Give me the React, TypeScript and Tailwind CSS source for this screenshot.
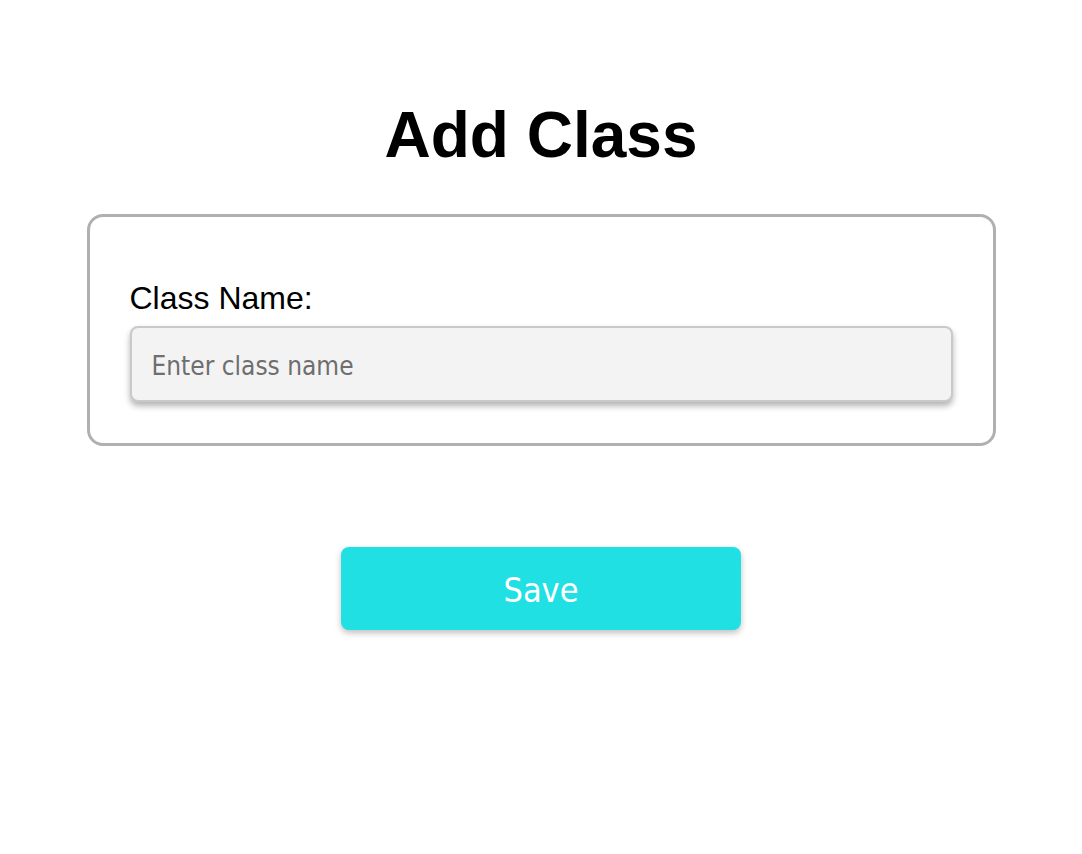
export default function App() {
  return (
    <div className="min-h-screen bg-white flex flex-col items-center font-['Liberation_Sans',Arial,sans-serif]">
      {/* Heading */}
      <h1 className="mt-[103px] text-[64px] leading-none font-bold text-black">Add Class</h1>

      {/* Form card */}
      <div className="mt-[47px] w-[909px] border-[3px] border-[#b0b0b0] rounded-[16px] px-[40px] pt-[63px] pb-[41px]">
        <label htmlFor="className" className="block text-[32px] leading-[36px] text-black">
          Class Name:
        </label>
        <input
          id="className"
          type="text"
          placeholder="Enter class name"
          className="mt-[10px] w-full h-[76px] px-[20px] pt-[3px] bg-[#f3f3f3] border-2 border-[#c9c9c9] rounded-[8px] shadow-[0_4px_6px_rgba(0,0,0,0.3)] text-[26px] font-['DejaVu_Sans_Condensed','DejaVu_Sans',sans-serif] text-black placeholder:text-[#6e6e6e] outline-none"
        />
      </div>

      {/* Save button */}
      <button
        type="button"
        className="mt-[101px] w-[400px] h-[83px] pt-[3px] rounded-[8px] bg-[#20e0e4] text-white text-[34px] font-['DejaVu_Sans_Condensed','DejaVu_Sans',sans-serif] shadow-[0_3px_6px_rgba(0,0,0,0.25)]"
      >
        Save
      </button>
    </div>
  );
}
